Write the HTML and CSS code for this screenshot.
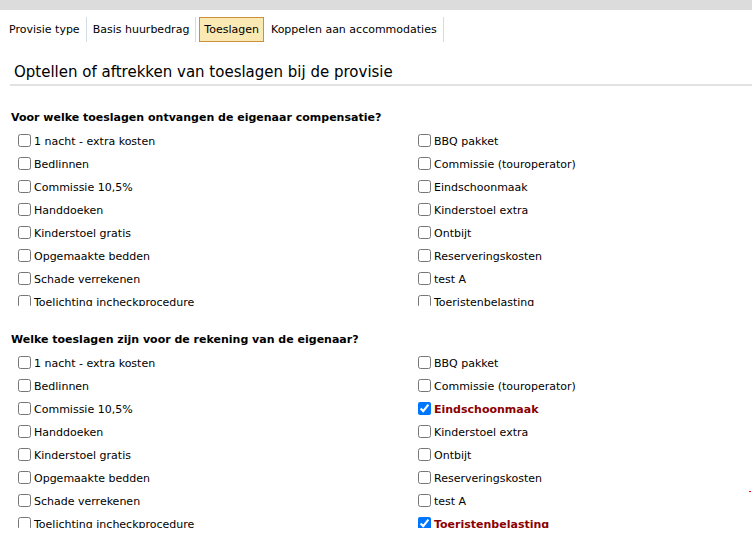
FILE: index.html
```html
<!DOCTYPE html>
<html lang="nl">
<head>
    <meta charset="UTF-8">
    <title>Provisie - Toeslagen</title>
    <link rel="stylesheet" href="styles.css">
</head>
<body>
    <div class="topbar"></div>

    <div class="tabs">
        <a class="tab">Provisie type</a>
        <a class="tab">Basis huurbedrag</a>
        <a class="tab active">Toeslagen</a>
        <a class="tab">Koppelen aan accommodaties</a>
    </div>

    <h2 class="page-title">Optellen of aftrekken van toeslagen bij de provisie</h2>

    <div class="section">
        <h3>Voor welke toeslagen ontvangen de eigenaar compensatie?</h3>
        <div class="options">
            <label class="option"><input type="checkbox"> 1 nacht - extra kosten</label>
            <label class="option"><input type="checkbox"> BBQ pakket</label>
            <label class="option"><input type="checkbox"> Bedlinnen</label>
            <label class="option"><input type="checkbox"> Commissie (touroperator)</label>
            <label class="option"><input type="checkbox"> Commissie 10,5%</label>
            <label class="option"><input type="checkbox"> Eindschoonmaak</label>
            <label class="option"><input type="checkbox"> Handdoeken</label>
            <label class="option"><input type="checkbox"> Kinderstoel extra</label>
            <label class="option"><input type="checkbox"> Kinderstoel gratis</label>
            <label class="option"><input type="checkbox"> Ontbijt</label>
            <label class="option"><input type="checkbox"> Opgemaakte bedden</label>
            <label class="option"><input type="checkbox"> Reserveringskosten</label>
            <label class="option"><input type="checkbox"> Schade verrekenen</label>
            <label class="option"><input type="checkbox"> test A</label>
            <label class="option"><input type="checkbox"> Toelichting incheckprocedure</label>
            <label class="option"><input type="checkbox"> Toeristenbelasting</label>
        </div>
    </div>

    <div class="section">
        <h3>Welke toeslagen zijn voor de rekening van de eigenaar?</h3>
        <div class="options">
            <label class="option"><input type="checkbox"> 1 nacht - extra kosten</label>
            <label class="option"><input type="checkbox"> BBQ pakket</label>
            <label class="option"><input type="checkbox"> Bedlinnen</label>
            <label class="option"><input type="checkbox"> Commissie (touroperator)</label>
            <label class="option"><input type="checkbox"> Commissie 10,5%</label>
            <label class="option checked"><input type="checkbox" checked> Eindschoonmaak</label>
            <label class="option"><input type="checkbox"> Handdoeken</label>
            <label class="option"><input type="checkbox"> Kinderstoel extra</label>
            <label class="option"><input type="checkbox"> Kinderstoel gratis</label>
            <label class="option"><input type="checkbox"> Ontbijt</label>
            <label class="option"><input type="checkbox"> Opgemaakte bedden</label>
            <label class="option"><input type="checkbox"> Reserveringskosten</label>
            <label class="option"><input type="checkbox"> Schade verrekenen</label>
            <label class="option"><input type="checkbox"> test A</label>
            <label class="option"><input type="checkbox"> Toelichting incheckprocedure</label>
            <label class="option checked"><input type="checkbox" checked> Toeristenbelasting</label>
        </div>
    </div>

    <span class="marker"></span>
</body>
</html>
```

FILE: styles.css
```css
body {
    position: relative;
    margin: 0;
    font-family: "DejaVu Sans", Verdana, sans-serif;
    font-size: 11px;
    color: #000;
    background-color: #fff;
    overflow: hidden;
}
.topbar {
    height: 10px;
    background-color: #dcdcdc;
}
.tabs {
    display: flex;
    margin-top: 7px;
    padding-left: 3px;
}
.tab {
    height: 25px;
    line-height: 25px;
    padding: 0 6px;
    border-right: 1px solid #d2dce6;
    color: #000;
}
.tab.active {
    background-color: #fbe9b4;
    border: 1px solid #c9913e;
    height: 23px;
    line-height: 23px;
    padding: 0 4px;
    margin: 0 1px 1px 3px;
}
.page-title {
    margin: 20px 0 0 10px;
    padding: 0 0 3px 4px;
    font-size: 15px;
    font-weight: normal;
    border-bottom: 2px solid #e2e2e2;
}
.section {
    padding-left: 11px;
    padding-bottom: 2px;
}
.section h3 {
    margin: 25px 0 6px 0;
    font-size: 11px;
    font-weight: bold;
}
.options {
    display: grid;
    grid-template-columns: 400px 1fr;
    grid-auto-rows: 23px;
    height: 176px;
    overflow: hidden;
    padding-left: 6px;
}
.option {
    display: flex;
    align-items: center;
    height: 23px;
    white-space: nowrap;
}
.option input {
    width: 13px;
    height: 13px;
    margin: 0 3px 2px 1px;
}
.option.checked {
    font-weight: bold;
    color: #8b0000;
}
.marker {
    position: absolute;
    right: 1px;
    top: 491px;
    width: 2px;
    height: 1px;
    background-color: #e00000;
}
```
